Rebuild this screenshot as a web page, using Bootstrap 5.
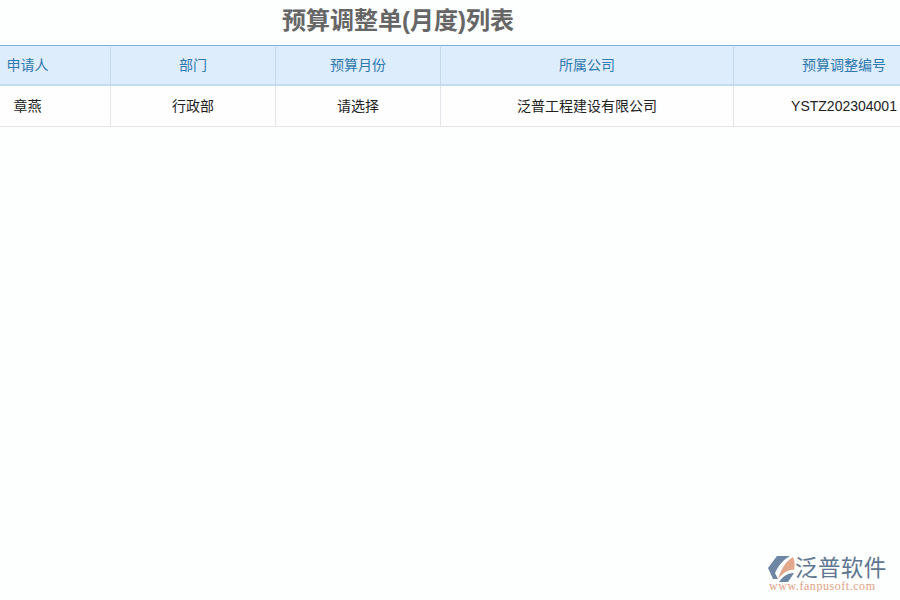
<!DOCTYPE html>
<html lang="zh-CN">
<head>
<meta charset="utf-8">
<title>预算调整单(月度)列表</title>
<link rel="stylesheet" href="https://cdn.jsdelivr.net/npm/bootstrap@5.3.0/dist/css/bootstrap.min.css">
<style>
html,body{height:100%;}
body{background:#fdfefe;font-family:"Liberation Sans","Noto Sans CJK SC",sans-serif;font-size:14px;color:#222;overflow:hidden;}
.pg{width:900px;height:600px;}
.ttl{height:45px;margin:0;padding:0 104px 4px 0;font-size:24px;font-weight:700;line-height:1;color:#666;}
.tblwrap{overflow:hidden;}
.gridtbl{table-layout:fixed;width:954px;margin:0;border-collapse:separate;border-spacing:0;}
.gridtbl th,.gridtbl td{padding:0;text-align:center;vertical-align:middle;font-weight:400;font-size:14px;}
.gridtbl th{height:41px;background:#deedfb;color:#2f78b0;border-top:1px solid #7fb1dc;border-bottom:2px solid #c4dbef;border-right:1px solid #c2d8ec;box-shadow:none;}
.gridtbl td{height:41px;background:#fefefe;color:#222;border-bottom:1px solid #e6e6e6;border-right:1px solid #e2e6ea;}
.gridtbl .c1{width:111px;padding-right:55px;}
.gridtbl .c2{width:165px;}
.gridtbl .c4{width:293px;}
.gridtbl .c5{width:220px;border-right:0;}
.brand{padding:0 10px 8px 0;}
.brand svg{display:block;}
.bname{font-size:22.5px;fill:#5f7690;letter-spacing:.4px;}
.burl{font-size:12px;fill:#e0a184;font-family:"Liberation Serif",serif;letter-spacing:.55px;}
</style>
</head>
<body>
<div class="pg d-flex flex-column">
  <h1 class="ttl d-flex align-items-center justify-content-center">预算调整单(月度)列表</h1>
  <div class="tblwrap">
    <table class="table gridtbl">
      <thead>
        <tr><th class="c1">申请人</th><th class="c2">部门</th><th class="c2">预算月份</th><th class="c4">所属公司</th><th class="c5">预算调整编号</th></tr>
      </thead>
      <tbody>
        <tr><td class="c1">章燕</td><td class="c2">行政部</td><td class="c2">请选择</td><td class="c4">泛普工程建设有限公司</td><td class="c5">YSTZ202304001</td></tr>
      </tbody>
    </table>
  </div>
  <div class="brand mt-auto d-flex justify-content-end">
    <svg width="122" height="40" viewBox="0 0 122 40" aria-label="泛普软件">
      <path d="M9 4 H22 C15 8 10 14 7 21 L10 27 L5 27 L0 16 Z" fill="#6d86a3"/>
      <path d="M10 27 C13 17 18 9 25 5 C27 9 27 14 26 18 C21 17 15 21 10 27 Z" fill="#e3a88c"/>
      <path d="M11 30 C15 24 20 21 26 21 L20 30 Z" fill="#6d86a3"/>
      <text class="bname" x="27" y="24">泛普软件</text>
      <text class="burl" x="1" y="38">www.fanpusoft.com</text>
    </svg>
  </div>
</div>
<script src="https://cdn.jsdelivr.net/npm/bootstrap@5.3.0/dist/js/bootstrap.bundle.min.js"></script>
</body>
</html>
